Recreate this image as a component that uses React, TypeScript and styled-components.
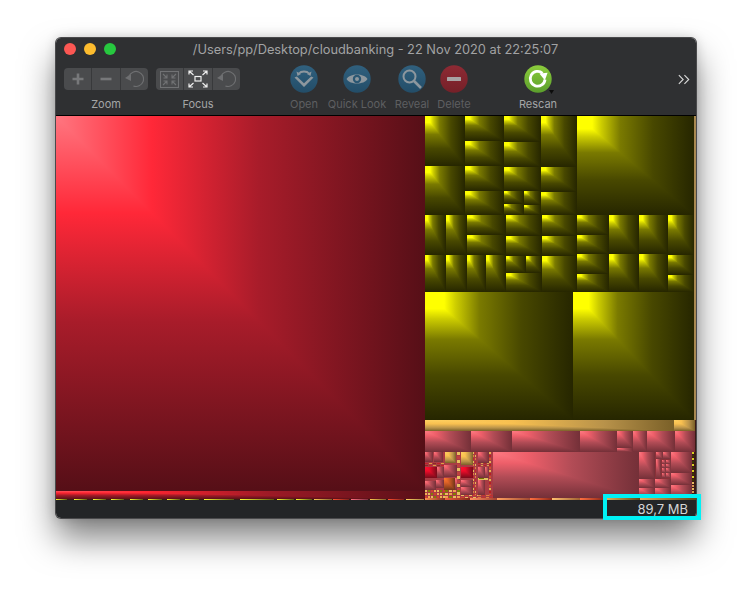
import React from "react";
import styled, { createGlobalStyle } from "styled-components";

const Global = createGlobalStyle`
  html, body { margin: 0; padding: 0; background: #fff; overflow: hidden; }
  body { font-family: "Inter", "Liberation Sans", sans-serif; }
`;

const palettes = {
  main: ["#ff7680 0%", "#ff2838 26%", "#a81c2a 55%", "#560f17 100%"],
  strip: ["#ff5058 0%", "#ff2430 24%", "#9c1a26 58%", "#5a1018 100%"],
  yellow: ["#ffff00 0%", "#ffff00 13%", "#cccc00 21%", "#7a7a00 37%", "#484800 65%", "#262600 100%"],
  pink: ["#ff7a82 0%", "#ee5f6a 24%", "#b24c56 54%", "#743038 100%"],
  gold: ["#ffd060 0%", "#f8c050 35%", "#b8924a 72%", "#7a6028 100%"],
  crimson: ["#ff1030 0%", "#f00c2a 35%", "#b00c22 68%", "#780c1a 100%"],
  orange: ["#ff7a30 0%", "#e06428 35%", "#a84c20 70%", "#703418 100%"],
};
type Pal = keyof typeof palettes;

const Page = styled.div`
  width: 752px;
  height: 592px;
  padding: 38px 56px 0;
  box-sizing: border-box;
  overflow: hidden;
`;
const Win = styled.div`
  position: relative;
  width: 640px;
  height: 480px;
  display: flex;
  flex-direction: column;
  border-radius: 5px;
  box-shadow: 0 0 0 1px #4a4a4c, 0 20px 34px rgba(0, 0, 0, 0.5), 0 0 12px rgba(0, 0, 0, 0.18);
`;
const Head = styled.header`
  height: 78px;
  box-sizing: border-box;
  flex: none;
  display: flex;
  flex-direction: column;
  background: #2f3032;
  border-bottom: 1px solid #000;
  border-radius: 5px 5px 0 0;
`;
const TitleBar = styled.div`
  height: 22px;
  flex: none;
  position: relative;
  display: flex;
  align-items: center;
  justify-content: center;
  padding-right: 1px;
  font-size: 12.8px;
  color: #a2a3a4;
  white-space: nowrap;
`;
const Lights = styled.div`
  position: absolute;
  left: 8px;
  top: 5px;
  display: flex;
  gap: 8px;
`;
const Light = styled.span<{ $c: string }>`
  width: 12px;
  height: 12px;
  border-radius: 50%;
  background: ${(p) => p.$c};
`;
const Toolbar = styled.div`
  display: flex;
  align-items: flex-start;
  padding: 5px 8px 0;
  color: #a0a1a2;
`;
const Item = styled.div<{ $w: number; $ml: number; $off?: boolean }>`
  width: ${(p) => p.$w}px;
  margin-left: ${(p) => p.$ml}px;
  flex: none;
  display: flex;
  flex-direction: column;
  align-items: center;
  gap: 5px;
  color: ${(p) => (p.$off ? "#5e5f61" : "#a4a5a6")};
`;
const Label = styled.span`
  font-size: 11px;
  line-height: 12px;
  white-space: nowrap;
`;
const IconZone = styled.div`
  height: 28px;
  display: flex;
  align-items: center;
`;
const Group = styled.div`
  width: 84px;
  height: 22px;
  display: flex;
  background: #4a4b4d;
  border-radius: 4px;
`;
const Seg = styled.div`
  flex: 1;
  display: flex;
  align-items: center;
  justify-content: center;
  & + & { border-left: 1px solid #38393b; }
`;
const More = styled.div`
  margin-left: auto;
  margin-right: -2px;
  margin-top: 9px;
  display: flex;
`;
const Map = styled.main`
  position: relative;
  flex: 1;
  background: #3a1a16;
  overflow: hidden;
`;
const TileBox = styled.div<{ $p: Pal }>`
  position: absolute;
  background: linear-gradient(to bottom, ${(p) => palettes[p.$p].join(",")});
  &::after {
    content: "";
    position: absolute;
    inset: 0;
    background: linear-gradient(to right, ${(p) => palettes[p.$p].join(",")});
    clip-path: polygon(0 0, 100% 0, 100% 100%);
  }
`;
const Flat = styled.div`
  position: absolute;
`;
const Status = styled.footer`
  height: 18px;
  flex: none;
  display: flex;
  align-items: center;
  justify-content: flex-end;
  padding-right: 8px;
  background: #232527;
  color: #d4d5d6;
  font-size: 13px;
  border-radius: 0 0 5px 5px;
`;
const Highlight = styled.div`
  position: absolute;
  left: 547px;
  top: 456px;
  width: 98px;
  height: 26px;
  box-sizing: border-box;
  border: 4.5px solid #00f2f5;
`;

type T = [Pal, number, number, number, number];
const t = (p: Pal, x0: number, y0: number, x1: number, y1: number): T => [p, x0, y0, x1, y1];

const base = [
  { x: 56, y: 490, w: 369, h: 9, c: "#561018" },
  { x: 425, y: 452, w: 68, h: 46, c: "#a83c44" },
  { x: 655, y: 452, w: 37, h: 46, c: "#8a3038" },
];

const tiles: T[] = [
  t("main", 56, 116, 425, 490),
  t("strip", 56, 491, 425, 499),
  t("yellow", 425, 116, 465, 166), t("yellow", 425, 166, 465, 215),
  t("yellow", 465, 116, 504, 141), t("yellow", 465, 141, 504, 166), t("yellow", 465, 166, 504, 191), t("yellow", 465, 191, 504, 215),
  t("yellow", 504, 116, 541, 142), t("yellow", 504, 142, 541, 167), t("yellow", 504, 167, 541, 191),
  t("yellow", 504, 191, 524, 204), t("yellow", 504, 204, 524, 215), t("yellow", 524, 191, 541, 205), t("yellow", 524, 205, 541, 215),
  t("yellow", 541, 116, 577, 167), t("yellow", 541, 167, 577, 192), t("yellow", 541, 192, 577, 215),
  t("yellow", 577, 116, 694, 215),
  t("yellow", 425, 215, 446, 255), t("yellow", 446, 215, 467, 255),
  t("yellow", 467, 215, 506, 235), t("yellow", 467, 235, 506, 255),
  t("yellow", 506, 215, 542, 236), t("yellow", 506, 236, 542, 256),
  t("yellow", 542, 215, 577, 236), t("yellow", 542, 236, 577, 256),
  t("yellow", 577, 215, 609, 235), t("yellow", 577, 235, 609, 254),
  t("yellow", 609, 215, 639, 254), t("yellow", 639, 215, 668, 254), t("yellow", 668, 215, 694, 255),
  t("yellow", 425, 255, 446, 292), t("yellow", 446, 255, 467, 292), t("yellow", 467, 255, 486, 292), t("yellow", 486, 255, 506, 292),
  t("yellow", 506, 256, 526, 273), t("yellow", 526, 256, 542, 273), t("yellow", 506, 273, 542, 292),
  t("yellow", 542, 256, 577, 292),
  t("yellow", 577, 254, 609, 274), t("yellow", 577, 274, 609, 292),
  t("yellow", 609, 254, 639, 292), t("yellow", 639, 254, 668, 292),
  t("yellow", 668, 255, 694, 275), t("yellow", 668, 275, 694, 292),
  t("yellow", 425, 292, 573, 420), t("yellow", 573, 292, 694, 420),
  t("gold", 425, 420, 674, 431), t("gold", 674, 420, 695, 431),
  t("pink", 425, 431, 471, 452), t("pink", 471, 431, 512, 452), t("pink", 512, 431, 580, 452), t("pink", 580, 431, 617, 452),
  t("pink", 617, 431, 633, 448), t("pink", 617, 448, 633, 452), t("pink", 633, 431, 647, 452), t("pink", 647, 431, 675, 452), t("pink", 675, 431, 695, 452),
  t("pink", 493, 452, 639, 498),
  t("pink", 639, 452, 655, 479), t("pink", 639, 479, 655, 488), t("pink", 639, 488, 655, 498),
  t("pink", 656, 452, 663, 459), t("pink", 663, 452, 671, 459), t("pink", 656, 459, 661, 479),
  t("pink", 662, 460, 666, 464), t("pink", 666, 460, 671, 464), t("pink", 662, 464, 666, 468), t("pink", 666, 464, 671, 468),
  t("pink", 662, 468, 666, 473), t("pink", 666, 468, 671, 473), t("pink", 662, 473, 666, 478), t("pink", 666, 473, 671, 478),
  t("pink", 655, 479, 671, 488), t("pink", 655, 488, 671, 498),
  t("pink", 671, 452, 692, 473), t("pink", 671, 473, 692, 485), t("pink", 671, 485, 692, 498),
  t("pink", 425, 452, 433, 462), t("pink", 434, 452, 443, 462),
  t("gold", 445, 452, 456, 463), t("gold", 461, 452, 473, 465), t("pink", 478, 452, 489, 463),
  t("crimson", 425, 467, 437, 478), t("pink", 444, 465, 457, 477), t("crimson", 461, 467, 473, 478), t("pink", 478, 467, 485, 478),
  t("pink", 425, 481, 436, 490), t("pink", 436, 480, 444, 488), t("orange", 444, 478, 455, 490),
  t("pink", 461, 480, 473, 487), t("pink", 461, 487, 473, 495), t("pink", 478, 480, 485, 495),
  t("pink", 485, 467, 489, 478), t("pink", 455, 478, 460, 490), t("pink", 437, 467, 444, 478),
];

const dash = (x: number, y: number, w: number, h: number, stepX: number, stepY: number, cols: string[]) => {
  const out: { x: number; y: number; w: number; h: number; c: string }[] = [];
  let i = 0;
  for (let yy = y; yy < y + h; yy += stepY) {
    for (let xx = x; xx < x + w; xx += stepX) {
      out.push({ x: xx, y: yy, w: Math.max(1, stepX - 1), h: Math.max(1, stepY - 1), c: cols[i % cols.length] });
      i++;
    }
  }
  return out;
};

const flats = [
  { x: 694, y: 116, w: 2, h: 304, c: "#a88850" },
  ...dash(425, 463, 20, 4, 4, 2, ["#c0202a", "#e0a040", "#8a2a20"]),
  ...dash(457, 452, 4, 44, 4, 4, ["#e8c060", "#c04040"]),
  ...dash(473, 452, 4, 44, 2, 3, ["#e8b858", "#c02828", "#e08040"]),
  ...dash(489, 452, 3, 44, 3, 3, ["#e8b050", "#b82020", "#d05030"]),
  ...dash(478, 463, 11, 3, 3, 2, ["#b02028", "#d8a050"]),
  { x: 478, y: 478, w: 10, h: 2, c: "#e0c060" },
  { x: 479, y: 478, w: 5, h: 1, c: "#707000" },
  ...dash(425, 490, 20, 8, 3, 3, ["#e8c060", "#808000", "#d04030", "#f0b050"]),
  ...dash(445, 490, 16, 8, 4, 3, ["#808000", "#e8c060", "#f0a050"]),
  ...dash(461, 495, 17, 3, 4, 2, ["#e8c060", "#d04030"]),
  ...dash(478, 495, 15, 3, 4, 2, ["#e08040", "#c03030"]),
  ...dash(692, 452, 3, 30, 3, 3, ["#d8d020", "#3a3a00"]),
  ...dash(692, 482, 3, 16, 3, 3, ["#e8b860", "#d89850"]),
];

const bottom: [number, number, string, string][] = [
  [56, 68, "#ffff30", "#5a5a10"], [74, 88, "#ffff30", "#5a5a10"], [93, 107, "#ffff30", "#5a5a10"], [111, 125, "#ffff30", "#5a5a10"],
  [130, 144, "#ffff30", "#5a5a10"], [148, 163, "#ffff30", "#5a5a10"], [167, 181, "#ffff30", "#5a5a10"], [185, 200, "#ffff30", "#5a5a10"],
  [204, 235, "#ffff30", "#5a5a10"], [240, 275, "#ffff30", "#5a5a10"], [277, 295, "#ffff30", "#5a5a10"], [296, 313, "#ffff30", "#5a5a10"],
  [314, 333, "#ffc850", "#80602a"], [333, 350, "#ff5030", "#802018"], [351, 369, "#ff7080", "#803040"], [370, 387, "#ffc850", "#80602a"],
  [388, 405, "#ff5030", "#802018"], [406, 425, "#ffd060", "#a08040"], [425, 445, "#ff9050", "#803020"], [445, 470, "#f06040", "#802818"],
  [470, 497, "#ff9060", "#a04030"], [497, 530, "#ffa060", "#a04830"], [530, 552, "#ff7040", "#902818"], [552, 580, "#ffc070", "#a06030"],
  [580, 603, "#ff7040", "#902818"], [603, 640, "#e8c060", "#604818"], [640, 696, "#e0b060", "#604818"],
];

const ox = 56;
const oy = 116;

const Plus = () => (
  <svg width="14" height="14" viewBox="0 0 14 14"><path d="M7 1.5v11M1.5 7h11" stroke="#77787a" strokeWidth="2.6" /></svg>
);
const Minus = () => (
  <svg width="14" height="14" viewBox="0 0 14 14"><path d="M1.5 7h11" stroke="#77787a" strokeWidth="2.6" /></svg>
);
const Reset = () => (
  <svg width="20" height="18" viewBox="0 0 20 18" fill="none">
    <path d="M5 6.4A7.5 7.5 0 1 1 9.4 16" stroke="#6e6f71" strokeWidth="1.2" />
    <path d="M1 8l6-4v7z" fill="#6e6f71" />
  </svg>
);
const FocusIn = () => (
  <svg width="19" height="17" viewBox="0 0 19 17" fill="none" stroke="#717274" strokeWidth="1.1">
    <rect x=".5" y=".5" width="18" height="16" />
    <path d="M3 3l4 4M7 3.5V7H3.5M16 3l-4 4M12 3.5V7h3.5M3 14l4-4M7 13.5V10H3.5M16 14l-4-4M12 13.5V10h3.5" />
  </svg>
);
const FocusOut = () => (
  <svg width="20" height="18" viewBox="0 0 20 18" fill="none" stroke="#f0f0f0" strokeWidth="1.2">
    <rect x="7" y="6.5" width="6" height="4.5" />
    <path d="M1 1l4.5 4M1 4.5V1h4M19 1l-4.5 4M19 4.5V1h-4M1 17l4.5-4M1 13.5V17h4M19 17l-4.5-4M19 13.5V17h-4" />
  </svg>
);

const Ball = ({ id, a, b, children }: { id: string; a: string; b: string; children: React.ReactNode }) => (
  <svg width="28" height="28" viewBox="0 0 28 28" overflow="visible">
    <defs>
      <linearGradient id={id} x1="0" y1="0" x2="0" y2="1">
        <stop offset="0" stopColor={a} />
        <stop offset="1" stopColor={b} />
      </linearGradient>
    </defs>
    <circle cx="14" cy="14" r="13.7" fill={`url(#${id})`} />
    {children}
  </svg>
);

const Chevrons = () => (
  <svg width="12" height="11" viewBox="0 0 14 12" fill="none" stroke="#d8d8d8" strokeWidth="1.3">
    <path d="M1 1l5 5-5 5M7.5 1l5 5-5 5" />
  </svg>
);

export default function App() {
  return (
    <Page>
      <Global />
      <Win>
        <Head>
          <TitleBar>
            <Lights>
              <Light $c="#fc5753" />
              <Light $c="#fdbc2e" />
              <Light $c="#27c83f" />
            </Lights>
            /Users/pp/Desktop/cloudbanking - 22 Nov 2020 at 22:25:07
          </TitleBar>
          <Toolbar>
            <Item $w={84} $ml={0}>
              <IconZone>
                <Group>
                  <Seg><Plus /></Seg>
                  <Seg><Minus /></Seg>
                  <Seg><Reset /></Seg>
                </Group>
              </IconZone>
              <Label>Zoom</Label>
            </Item>
            <Item $w={84} $ml={8}>
              <IconZone>
                <Group>
                  <Seg><FocusIn /></Seg>
                  <Seg><FocusOut /></Seg>
                  <Seg><Reset /></Seg>
                </Group>
              </IconZone>
              <Label>Focus</Label>
            </Item>
            <Item $w={30} $ml={49} $off>
              <IconZone>
                <Ball id="o" a="#30607e" b="#234d68">
                  <path d="M4.5 12.5L14 22l9.5-9.5-2.4-1L14 18.2 6.9 11.5z" fill="#8d979e" />
                  <path d="M9 8.5C11 5.8 17 5.8 19 8.5" stroke="#8d979e" strokeWidth="1.8" fill="none" />
                  <path d="M6.5 6.5l1 4.5 3.5-2zM21.5 6.5l-1 4.5-3.5-2z" fill="#8d979e" />
                </Ball>
              </IconZone>
              <Label>Open</Label>
            </Item>
            <Item $w={58} $ml={9} $off>
              <IconZone>
                <Ball id="q" a="#30607e" b="#234d68">
                  <path d="M3.5 14C7 8 21 8 24.5 14 21 20 7 20 3.5 14z" fill="#8d979e" />
                  <circle cx="14" cy="14" r="4.2" fill="#2a5773" />
                  <circle cx="14" cy="14" r="2" fill="#8d979e" />
                </Ball>
              </IconZone>
              <Label>Quick Look</Label>
            </Item>
            <Item $w={34} $ml={9} $off>
              <IconZone>
                <Ball id="r" a="#30607e" b="#234d68">
                  <circle cx="11.5" cy="11.5" r="6" fill="none" stroke="#8d979e" strokeWidth="2" />
                  <path d="M16 16l7 7" stroke="#8d979e" strokeWidth="2.6" />
                </Ball>
              </IconZone>
              <Label>Reveal</Label>
            </Item>
            <Item $w={34} $ml={8} $off>
              <IconZone>
                <Ball id="d" a="#8e2a34" b="#752028">
                  <rect x="7" y="12" width="14" height="4" rx=".5" fill="#a8a3a4" />
                </Ball>
              </IconZone>
              <Label>Delete</Label>
            </Item>
            <Item $w={40} $ml={47}>
              <IconZone>
                <Ball id="g" a="#8ccc3c" b="#5b9e2c">
                  <path d="M18.5 8.2A7.4 7.4 0 1 0 21 14.5" fill="none" stroke="#fff" strokeWidth="2.8" />
                  <path d="M15 9.5l7.5-3.5v8z" fill="#fff" transform="rotate(20 18 10)" />
                  <path d="M25 25h5l-2.5 4z" fill="#0c0c0c" />
                </Ball>
              </IconZone>
              <Label>Rescan</Label>
            </Item>
            <More><Chevrons /></More>
          </Toolbar>
        </Head>
        <Map>
          {base.map((f, i) => (
            <Flat key={i} style={{ left: f.x - ox, top: f.y - oy, width: f.w, height: f.h, background: f.c }} />
          ))}
          {tiles.map(([p, x0, y0, x1, y1], i) => (
            <TileBox key={i} $p={p} style={{ left: x0 - ox, top: y0 - oy, width: x1 - x0, height: y1 - y0 }} />
          ))}
          {flats.map((f, i) => (
            <Flat key={i} style={{ left: f.x - ox, top: f.y - oy, width: f.w, height: f.h, background: f.c }} />
          ))}
          {bottom.map(([a, b, c0, c1], i) => (
            <Flat
              key={i}
              style={{
                left: a - ox,
                top: (a < 425 ? 499 : 498) - oy,
                width: b - a - (a < 425 ? 1 : 0),
                height: a < 425 ? 1 : 2,
                background: `linear-gradient(to right, ${c0}, ${c1})`,
              }}
            />
          ))}
        </Map>
        <Status>89,7 MB</Status>
        <Highlight />
      </Win>
    </Page>
  );
}
